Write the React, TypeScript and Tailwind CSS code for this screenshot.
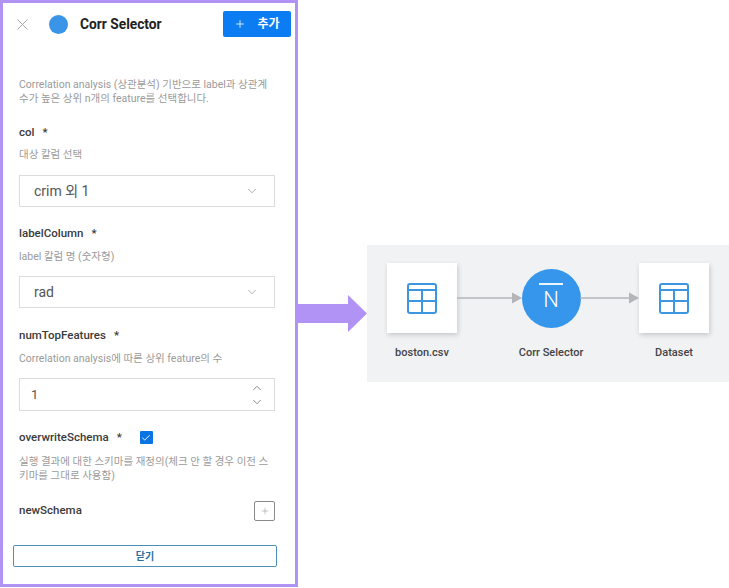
import { FC, ReactNode } from 'react';
import { ChevronDown, ChevronUp, Plus, X, Check } from 'lucide-react';

const FONT = "font-['Roboto','Noto_Sans_CJK_KR',sans-serif]";

const Label: FC<{ children: ReactNode; required?: boolean; className?: string }> = ({ children, required, className = '' }) => (
  <div className={`text-[11.5px] leading-[12px] pb-[2px] font-medium text-[#3a3a3a] ${className}`}>
    {children}
    {required && <span className="ml-[8px]">*</span>}
  </div>
);

const Hint: FC<{ children: ReactNode; className?: string }> = ({ children, className = '' }) => (
  <div className={`text-[10.5px] leading-[14px] text-[#9a9a9a] ${className}`}>{children}</div>
);

const SelectBox: FC<{ value: string; className?: string }> = ({ value, className = '' }) => (
  <div className={`h-[32px] border border-[#dcdcdc] flex items-center justify-between pl-[14px] pr-[15px] ${className}`}>
    <span className="text-[14px] text-[#555]">{value}</span>
    <ChevronDown size={14} strokeWidth={1} className="text-[#777]" />
  </div>
);

// table icon used by the two data nodes
const TableIcon = () => (
  <svg width="30" height="31" viewBox="0 0 30 31" fill="none" stroke="#3d97e0" strokeWidth="2">
    <rect x="1" y="1" width="28" height="29" rx="2" />
    <path d="M1 7h28M1 18h28M15 7v23" />
  </svg>
);

const Connector: FC<{ width: number }> = ({ width }) => (
  <svg width={width} height="12" viewBox={`0 0 ${width} 12`} className="shrink-0">
    <line x1="0" y1="6" x2={width - 4} y2="6" stroke="#b3b5b9" strokeWidth="1.5" />
    <path d={`M${width - 10} 0.5 L${width} 6 L${width - 10} 11.5 Z`} fill="#b3b5b9" />
  </svg>
);

const NodeCol: FC<{ label: string; width: number; children: ReactNode }> = ({ label, width, children }) => (
  <div className="flex flex-col items-center shrink-0" style={{ width }}>
    <div className="h-[70px] flex items-center justify-center">{children}</div>
    <div className="mt-[13px] text-[11px] leading-[14px] font-medium text-[#444] whitespace-nowrap">{label}</div>
  </div>
);

const App: FC = () => {
  return (
    <div className={`relative w-[729px] h-[588px] bg-white flex overflow-hidden ${FONT}`}>
      <div className="w-[298px] h-[587px] shrink-0 border-[3px] border-[#b093f5] flex flex-col">
        {/* header */}
        <div className="flex items-center pl-[10px] pr-[4px] pt-[8px] h-[26px] box-content">
          <X size={19} strokeWidth={1.1} className="text-[#9a9a9a]" />
          <div className="ml-[17px] w-[19px] h-[19px] rounded-full bg-[#3a94e8]" />
          <div className="ml-[12px] text-[13.75px] font-bold text-[#222]">Corr Selector</div>
          <button className="ml-auto w-[68px] h-[26px] bg-[#0b7cf2] rounded-[2px] text-white flex items-center justify-center gap-[11px] text-[12px] font-bold">
            <Plus size={12} strokeWidth={1.6} />
            <span>추가</span>
          </button>
        </div>

        <div className="flex-1 pl-[16px] pr-[20px]">
          <Hint className="mt-[41px] w-[262px] whitespace-nowrap">
            Correlation analysis (상관분석) 기반으로 label과 상관계<br />수가 높은 상위 n개의 feature를 선택합니다.
          </Hint>

          <Label required className="mt-[20px]">col</Label>
          <Hint className="mt-[8px]">대상 칼럼 선택</Hint>
          <SelectBox value="crim 외 1" className="mt-[13px]" />

          <Label required className="mt-[20px]">labelColumn</Label>
          <Hint className="mt-[9px]">label 칼럼 명 (숫자형)</Hint>
          <SelectBox value="rad" className="mt-[12px]" />

          <Label required className="mt-[21px]">numTopFeatures</Label>
          <Hint className="mt-[9px]">Correlation analysis에 따른 상위 feature의 수</Hint>
          <div className="mt-[12px] h-[33px] border border-[#dcdcdc] flex items-center justify-between pl-[11px] pr-[10px]">
            <span className="text-[13px] text-[#555]">1</span>
            <div className="flex flex-col items-center">
              <ChevronUp size={14} strokeWidth={1.1} className="text-[#555]" />
              <ChevronDown size={14} strokeWidth={1.1} className="text-[#555]" />
            </div>
          </div>

          <div className="mt-[20px] flex items-center h-[13px]">
            <Label required>overwriteSchema</Label>
            <div className="ml-[18px] w-[13px] h-[13px] bg-[#0b74e5] rounded-[1px] flex items-center justify-center">
              <Check size={10} strokeWidth={2.2} className="text-white" />
            </div>
          </div>
          <Hint className="mt-[11px] w-[262px]">
            실행 결과에 대한 스키마를 재정의(체크 안 할 경우 이전 스<br />키마를 그대로 사용함)
          </Hint>

          <div className="mt-[18px] flex items-center justify-between">
            <Label>newSchema</Label>
            <div className="w-[21px] h-[20px] border border-[#8a8a8a] rounded-[2px] flex items-center justify-center">
              <Plus size={10} strokeWidth={1} className="text-[#777]" />
            </div>
          </div>
        </div>

        <div className="pl-[10px] pr-[18px] pb-[17px]">
          <button className="w-full h-[22px] border border-[#4a8fb5] rounded-[2px] text-[10px] font-bold text-[#2b6f9e] flex items-center justify-center">
            닫기
          </button>
        </div>
      </div>

      {/* pipeline diagram */}
      <div className="flex-1 pl-[69px] pt-[245px]">
        <div className="w-[362px] h-[137px] bg-[#f1f2f4] pl-[20px] pt-[18px]">
          <div className="flex items-start">
            <NodeCol label="boston.csv" width={70}>
              <div className="w-[70px] h-[70px] bg-white shadow-[1px_2px_5px_rgba(0,0,0,0.18)] flex items-center justify-center">
                <TableIcon />
              </div>
            </NodeCol>
            <div className="h-[70px] flex items-center">
              <Connector width={65} />
            </div>
            <NodeCol label="Corr Selector" width={58}>
              <div className="w-[59px] h-[59px] rounded-full bg-[#3596ec] flex flex-col items-center justify-center text-white">
                <div className="w-[24px] h-[1.5px] bg-white/90" />
                <div className="mt-[2px] text-[22px] leading-[26px] font-light">N</div>
              </div>
            </NodeCol>
            <div className="h-[70px] flex items-center">
              <Connector width={59} />
            </div>
            <NodeCol label="Dataset" width={70}>
              <div className="w-[70px] h-[70px] bg-white shadow-[1px_2px_5px_rgba(0,0,0,0.18)] flex items-center justify-center">
                <TableIcon />
              </div>
            </NodeCol>
          </div>
        </div>
      </div>

      {/* big purple arrow between the panel and the diagram */}
      <svg width="72" height="37" viewBox="0 0 72 37" className="absolute left-[296px] top-[295px]">
        <path d="M0 9 H52 V0 L71 18.5 L52 37 V28 H0 Z" fill="#b093f5" />
      </svg>
    </div>
  );
};

export default App;
